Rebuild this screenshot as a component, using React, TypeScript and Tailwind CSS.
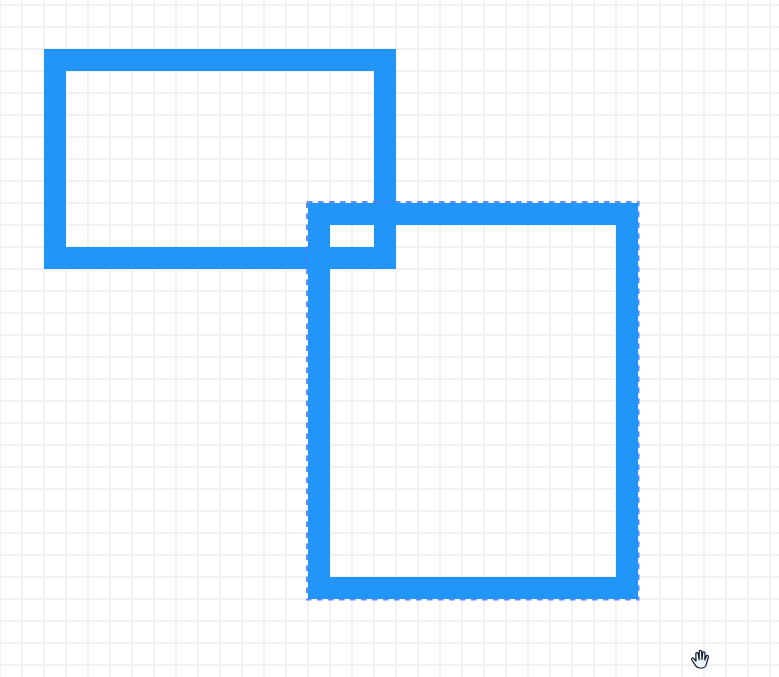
const cursorPath =
  'M5 11 L2.6 8.4 C1.6 7.4 0 8.6 0.8 10 L4.6 15.6 C5.6 17.2 7 18 8.6 18 L11 18 C13.5 18 15 16.2 15.4 14 L17.4 7 C17.8 5.4 15.8 4.8 15.2 6.4 L13.8 10 L14 3 C14 1.4 11.8 1.2 11.6 3 L11 9.4 L10.6 1.8 C10.5 0 8.2 0 8.2 1.8 L8.2 9.6 L7.2 3.6 C6.9 2 4.6 2.4 4.8 4.2 Z'

export default function App() {
  return (
    <div className="relative h-[677px] w-[779px] overflow-hidden bg-white bg-[linear-gradient(to_right,#f0f2f6_2px,transparent_2px),linear-gradient(to_bottom,#f0f2f6_2px,transparent_2px)] bg-[size:22px_22px] bg-[position:-1px_4px]">
      {/* shapes on the canvas */}
      <div className="absolute left-[44px] top-[49px] h-[220px] w-[352px] border-[22px] border-[#2196f8]" />
      <div className="absolute left-[308px] top-[203px] h-[396px] w-[330px] border-[22px] border-[#2196f8]" />
      {/* selection outline */}
      <svg className="absolute left-[300px] top-[195px]" width="346" height="412" viewBox="0 0 346 412" fill="none">
        <rect x="7" y="7" width="331.5" height="397.5" stroke="#4a7af5" strokeOpacity="0.85" strokeWidth="2" strokeDasharray="5.5 5.5" />
      </svg>
      {/* hand cursor */}
      <svg className="absolute left-[691px] top-[650px]" width="18" height="18" viewBox="0 0 18 18" overflow="visible">
        <path d={cursorPath} fill="#e8f3fb" stroke="#111827" strokeWidth="1.2" strokeLinejoin="round" />
      </svg>
    </div>
  )
}
